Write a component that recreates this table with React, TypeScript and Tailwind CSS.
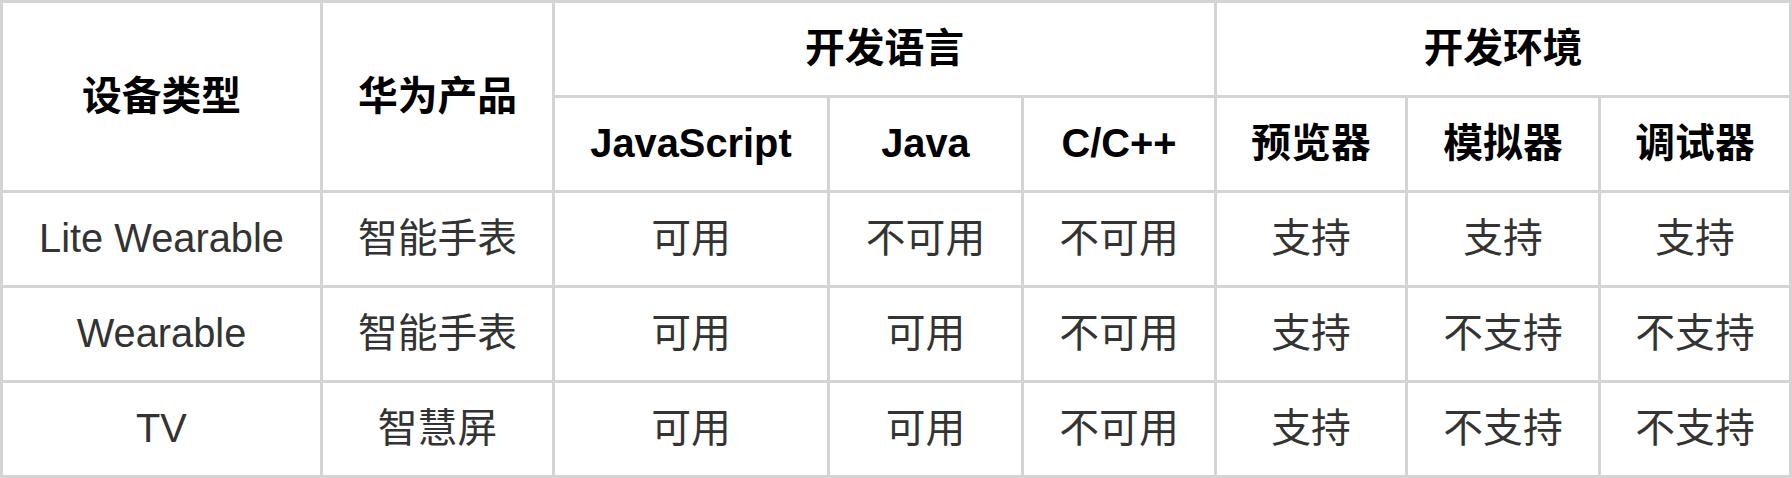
import React from "react";

type Row = {
  device: string;
  product: string;
  lang: [string, string, string];
  env: [string, string, string];
};

const rows: Row[] = [
  { device: "Lite Wearable", product: "智能手表", lang: ["可用", "不可用", "不可用"], env: ["支持", "支持", "支持"] },
  { device: "Wearable", product: "智能手表", lang: ["可用", "可用", "不可用"], env: ["支持", "不支持", "不支持"] },
  { device: "TV", product: "智慧屏", lang: ["可用", "可用", "不可用"], env: ["支持", "不支持", "不支持"] },
];

export default function App() {
  return (
    <div className="w-[1792px] h-[478px] bg-white">
      <div
        className="grid grid-cols-[317px_229px_272px_191px_190px_188px_190px_188px] grid-rows-[92px_92px_92px_92px_92px] gap-[3px] p-[3px] bg-[#d4d4d4] text-[39.8px] leading-none"
        style={{ fontFamily: '"Liberation Sans", "Noto Sans CJK SC", sans-serif' }}
      >
        {/* ── header ─────────────────────────────── */}
        <HeadCell className="row-span-2">设备类型</HeadCell>
        <HeadCell className="row-span-2">华为产品</HeadCell>
        <HeadCell className="col-span-3">开发语言</HeadCell>
        <HeadCell className="col-span-3">开发环境</HeadCell>
        <HeadCell>JavaScript</HeadCell>
        <HeadCell>Java</HeadCell>
        <HeadCell>C/C++</HeadCell>
        <HeadCell>预览器</HeadCell>
        <HeadCell>模拟器</HeadCell>
        <HeadCell>调试器</HeadCell>

        {/* ── body ───────────────────────────────── */}
        {rows.map((r) => (
          <React.Fragment key={r.device}>
            <Cell>{r.device}</Cell>
            <Cell>{r.product}</Cell>
            {r.lang.map((v, i) => (
              <Cell key={"l" + i}>{v}</Cell>
            ))}
            {r.env.map((v, i) => (
              <Cell key={"e" + i}>{v}</Cell>
            ))}
          </React.Fragment>
        ))}
      </div>
    </div>
  );
}

function HeadCell({ children, className = "" }: { children: React.ReactNode; className?: string }) {
  return (
    <div className={`bg-white flex items-center justify-center font-bold text-black ${className}`}>
      {children}
    </div>
  );
}

function Cell({ children }: { children: React.ReactNode }) {
  return <div className="bg-white flex items-center justify-center text-[#333333]">{children}</div>;
}
